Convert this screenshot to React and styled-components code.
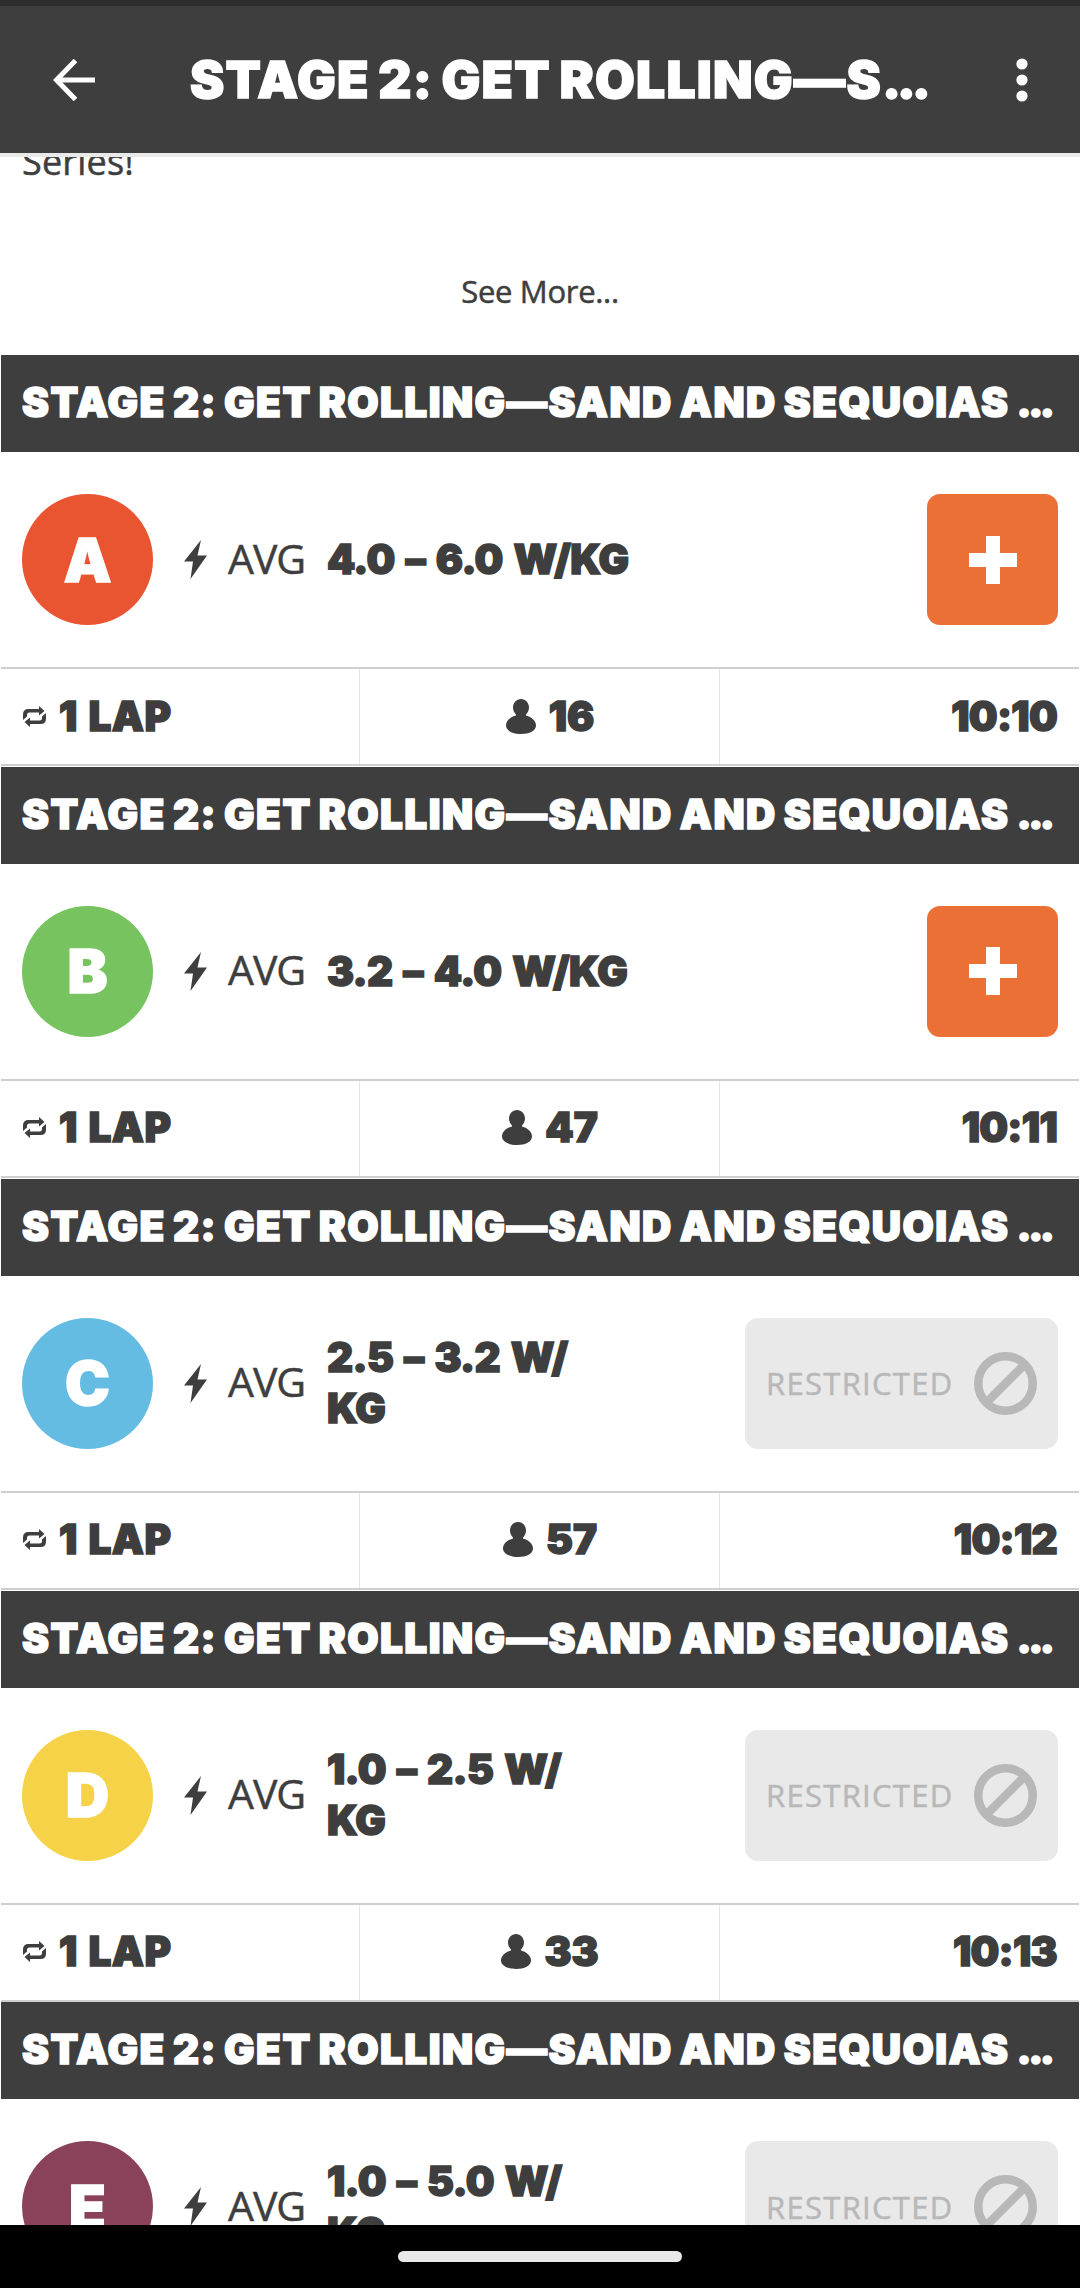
import React from "react"
import styled, { createGlobalStyle, css } from "styled-components"

const groups = [
    { letter: "A", color: "#e95431", range: ["4.0 – 6.0 W/KG"], riders: "16", time: "10:10", open: true },
    { letter: "B", color: "#76c35f", range: ["3.2 – 4.0 W/KG"], riders: "47", time: "10:11", open: true },
    { letter: "C", color: "#65bce3", range: ["2.5 – 3.2 W/", "KG"], riders: "57", time: "10:12" },
    { letter: "D", color: "#f6d248", range: ["1.0 – 2.5 W/", "KG"], riders: "33", time: "10:13" },
    { letter: "E", color: "#8a425a", range: ["1.0 – 5.0 W/", "KG"] },
];

const BackIcon = () => (
    <svg width="42" height="42" viewBox="0 0 42 42" fill="none" stroke="#fff" strokeWidth="5">
        <path d="M42 21H4M22.500 1.500L3.500 21L22.500 40.500" />
    </svg>
);

const MoreIcon = () => (
    <svg width="12" height="44" viewBox="0 0 12 44" fill="#fff">
        <circle cx="6" cy="6" r="5.600" />
        <circle cx="6" cy="22" r="5.600" />
        <circle cx="6" cy="38" r="5.600" />
    </svg>
);

const BoltIcon = () => (
    <svg width="23" height="39" viewBox="0 0 23 39" fill="#3e3e3e">
        <path d="M17 0L0 21.500H9L6.500 39L23 15.500H13.500Z" />
    </svg>
);

const LapIcon = () => (
    <svg width="23" height="21" viewBox="0 0 23 21" fill="#3e3e3e">
        <path d="M16 0L21.500 5L16 9.500V6.500H6.500Q4 6.500 4 9V10.500L0 14V8.500Q0 3 5.500 3H16Z" />
        <path d="M7 21L1.500 16L7 11.500V14.500H16.500Q19 14.500 19 12V10.500L23 7V12.500Q23 18 17.500 18H7Z" />
    </svg>
);

const RiderIcon = () => (
    <svg width="30" height="35" viewBox="0 0 30 35" fill="#3e3e3e">
        <path d="M15 0C10.500 0 7 3.800 7 8.500C7 11.500 8.500 14 10 15.500V16.500C4 18 0 22 0 26.500C0 31.500 6.500 35 15 35S30 31.500 30 26.500C30 22 26 18 20 16.500V15.500C21.500 14 23 11.500 23 8.500C23 3.800 19.500 0 15 0Z" />
    </svg>
);

const PlusIcon = () => (
    <svg width="48" height="48" viewBox="0 0 48 48" fill="#fff">
        <path d="M17 0H31V17H48V31H31V48H17V31H0V17H17Z" />
    </svg>
);

const BlockedIcon = () => (
    <svg width="63" height="63" viewBox="0 0 63 63" fill="none" stroke="#b8b8b8" strokeWidth="8.500">
        <circle cx="31.500" cy="31.500" r="27.250" />
        <path d="M12.500 50.500L50.500 12.500" />
    </svg>
);

const Group = ({ group }) => (
    <Card>
        <CardTitle>STAGE 2: GET ROLLING—SAND AND SEQUOIAS <Dots>...</Dots></CardTitle>
        <CardBody>
            <Badge color={group.color}>{group.letter}</Badge>
            <BoltIcon />
            <Avg>AVG</Avg>
            <Range>
                {group.range.map(line => <div key={line}>{line}</div>)}
            </Range>
            {group.open ?
                <JoinButton aria-label="Join"><PlusIcon /></JoinButton>
                :
                <Restricted>
                    <span>RESTRICTED</span>
                    <BlockedIcon />
                </Restricted>
            }
        </CardBody>
        {group.time &&
            <Stats>
                <LapStat align="flex-start"><LapIcon />1 LAP</LapStat>
                <RiderStat align="center"><RiderIcon />{group.riders}</RiderStat>
                <Stat align="flex-end">{group.time}</Stat>
            </Stats>
        }
    </Card>
);

const App = () => (
    <>
        <GlobalStyle />
        <Screen>
            <StatusBar />
            <Header>
                <BackIcon />
                <HeaderTitle>STAGE 2: GET ROLLING—S<Dots>...</Dots></HeaderTitle>
                <MoreIcon />
            </Header>
            <Content>
                <Description>Series!</Description>
                <SeeMore>See More...</SeeMore>
                {groups.map(group => <Group key={group.letter} group={group} />)}
            </Content>
            <NavBar><NavHandle /></NavBar>
        </Screen>
    </>
)

const GlobalStyle = createGlobalStyle`
    * { box-sizing: border-box; }
    body { margin: 0; background: #fff; }
    svg { display: block; flex: none; }
`;

const display = css`
    font-family: Inter, sans-serif;
    font-weight: 900;
    -webkit-text-stroke: 1.5px currentColor;
    white-space: nowrap;
`;

const Screen = styled.div`
    width: 1080px;
    height: 2288px;
    display: flex;
    flex-direction: column;
    overflow: hidden;
    font-family: "Open Sans", sans-serif;
    color: #3e3e3e;
    -webkit-text-stroke: 0.5px currentColor;
`;

const StatusBar = styled.div`
    flex: none;
    height: 6px;
    background: #2d2d2d;
`;

const Header = styled.header`
    flex: none;
    display: flex;
    align-items: center;
    height: 151px;
    padding: 0 52px 0 53px;
    background: #3e3e3e;
    border-bottom: 4px solid #e9e9e9;
`;

const HeaderTitle = styled.h1`
    ${display}
    flex: 1;
    margin: 0 0 0 95px;
    padding-bottom: 2px;
    color: #fff;
    font-size: 51.5px;
    line-height: 60px;
    letter-spacing: 1.2px;
    word-spacing: -3px;
`;

const Dots = styled.span`
    letter-spacing: -0.085em;
`;

const Content = styled.main`
    flex: 1;
    min-height: 0;
    overflow: hidden;
`;

const Description = styled.p`
    margin: -23px 0 0;
    padding-left: 22px;
    font-size: 36px;
    line-height: 56px;
    letter-spacing: 0.2px;
`;

const SeeMore = styled.p`
    margin: 80px 0 43px;
    text-align: center;
    font-size: 31px;
    line-height: 42px;
    letter-spacing: -0.3px;
`;

const Card = styled.section`
    height: 411.85px;
    padding: 0 1px;
`;

const CardTitle = styled.h2`
    ${display}
    margin: 0;
    height: 97px;
    padding: 0 21px;
    background: #3e3e3e;
    color: #fff;
    font-size: 40.5px;
    line-height: 96px;
    letter-spacing: 1.45px;
    word-spacing: -2.5px;
`;

const CardBody = styled.div`
    display: flex;
    align-items: center;
    height: 217px;
    padding: 0 21px;
    border-bottom: 2px solid #cfcfcf;
`;

const Badge = styled.div`
    ${display}
    flex: none;
    display: flex;
    align-items: center;
    justify-content: center;
    width: 131px;
    height: 131px;
    margin-right: 31px;
    border-radius: 50%;
    background: ${props => props.color};
    color: #fff;
    font-size: 60px;
    line-height: 1;
`;

const Avg = styled.div`
    flex: none;
    width: 99px;
    margin-left: 21px;
    padding-bottom: 3px;
    font-size: 41px;
    line-height: 51px;
    letter-spacing: -1px;
`;

const Range = styled.div`
    ${display}
    flex: 1;
    font-size: 40.5px;
    line-height: 51px;
    letter-spacing: -0.7px;
    word-spacing: 3.5px;
`;

const JoinButton = styled.button`
    display: flex;
    align-items: center;
    justify-content: center;
    width: 131px;
    height: 131px;
    padding: 0;
    border: 0;
    border-radius: 13px;
    background: #eb7036;
`;

const Restricted = styled.div`
    flex: none;
    display: flex;
    align-items: center;
    justify-content: space-between;
    width: 313px;
    height: 131px;
    padding: 0 21px;
    border-radius: 13px;
    background: #e9e9e9;
    color: #b8b8b8;
    font-size: 31px;
    letter-spacing: 1.3px;
`;

const Stats = styled.div`
    display: grid;
    grid-template-columns: 359px 360px 1fr;
    height: 97px;
    border-bottom: 2px solid #cfcfcf;
`;

const Stat = styled.div`
    ${display}
    display: flex;
    align-items: center;
    justify-content: ${props => props.align};
    gap: 13px;
    padding: 0 22px 1px;
    border-right: 1px solid #e5e5e5;
    font-size: 40.5px;
    line-height: 51px;

    &:last-child {
        border-right: 0;
        letter-spacing: -0.7px;
    }
`;

const LapStat = styled(Stat)`
    letter-spacing: 0.5px;
    word-spacing: 2px;
`;

const RiderStat = styled(Stat)`
    padding-left: 43px;
`;

const NavBar = styled.footer`
    flex: none;
    display: flex;
    justify-content: center;
    height: 63px;
    padding-top: 26px;
    background: #000;
`;

const NavHandle = styled.div`
    width: 284px;
    height: 11px;
    border-radius: 6px;
    background: #e9e9e9;
`;

export default App;
